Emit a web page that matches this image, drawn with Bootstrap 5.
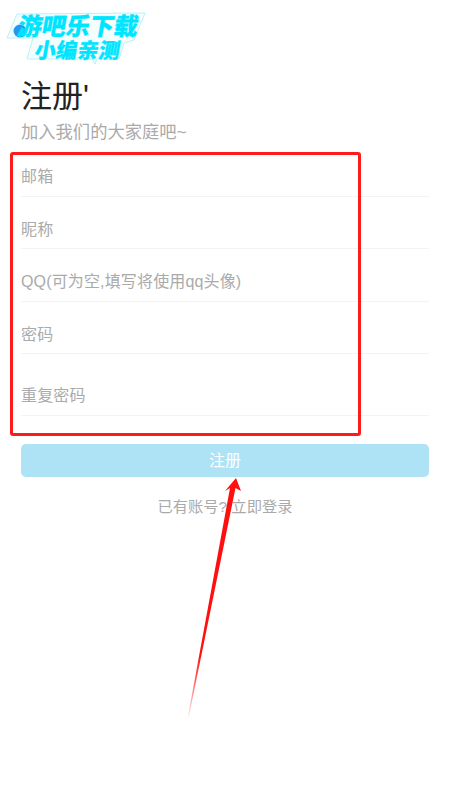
<!DOCTYPE html>
<html lang="zh-CN">
<head>
    <meta charset="UTF-8">
    <meta name="viewport" content="width=device-width, initial-scale=1.0">
    <title>注册</title>
    <link href="https://cdn.jsdelivr.net/npm/bootstrap@5.3.0/dist/css/bootstrap.min.css" rel="stylesheet">
    <style>
        body {
            font-family: "Liberation Sans", "Noto Sans CJK SC", sans-serif;
            background-color: #fff;
            width: 450px;
            height: 800px;
            overflow: hidden;
            position: relative;
        }

        .page-wrap {
            padding: 76px 21px 0;
        }

        .reg-title {
            font-size: 31px;
            line-height: 42px;
            font-weight: 400;
            color: #222;
            margin: 0;
        }

        .reg-sub {
            font-size: 17.3px;
            line-height: 24px;
            color: #aaa;
            margin: 2px 0 0;
        }

        .reg-field {
            display: block;
            width: 100%;
            height: 52.6px;
            border: 0;
            border-bottom: 1px solid #f3f3f3;
            border-radius: 0;
            padding: 15px 0 0;
            background: transparent;
            font-size: 16px;
            letter-spacing: .15px;
            box-shadow: none;
        }

        .reg-field.tall {
            height: 62px;
            padding: 22px 0 0;
        }

        .reg-field::placeholder {
            color: #aaa;
            opacity: 1;
        }

        .reg-btn {
            height: 33px;
            margin-top: 28px;
            padding: 0;
            font-size: 16px;
            line-height: 33px;
            color: #fff;
            background-color: #aee3f6;
            border: 0;
            border-radius: 5px;
        }

        .reg-link {
            font-size: 15.3px;
            line-height: 24px;
            color: #aaa;
            margin-top: 18px;
        }

        .red-box {
            position: absolute;
            left: 10px;
            top: 152px;
            width: 351px;
            height: 284px;
            border: 3px solid #fb1c1c;
            border-radius: 3px;
            pointer-events: none;
        }

        .overlay-svg {
            position: absolute;
            left: 0;
            top: 0;
            pointer-events: none;
        }

        .logo-a {
            font-family: "Noto Sans CJK SC", sans-serif;
            font-weight: 900;
            fill: #00e5ff;
            stroke: #00e5ff;
            stroke-width: 0.3px;
        }
    </style>
</head>
<body>
    <div class="page-wrap">
        <h1 class="reg-title">注册'</h1>
        <p class="reg-sub">加入我们的大家庭吧~</p>
        <form>
            <input type="text" class="form-control reg-field" placeholder="邮箱">
            <input type="text" class="form-control reg-field" placeholder="昵称">
            <input type="text" class="form-control reg-field" placeholder="QQ(可为空,填写将使用qq头像)">
            <input type="password" class="form-control reg-field" placeholder="密码">
            <input type="password" class="form-control reg-field tall" placeholder="重复密码">
            <button type="button" class="btn w-100 d-block reg-btn">注册</button>
        </form>
        <div class="text-center reg-link">已有账号? 立即登录</div>
    </div>

    <div class="red-box"></div>

    <svg class="overlay-svg" width="450" height="800" viewBox="0 0 450 800">
        <defs>
            <linearGradient id="tailFade" gradientUnits="userSpaceOnUse" x1="188" y1="716" x2="200" y2="655">
                <stop offset="0" stop-color="#ff0000" stop-opacity="0.1"/>
                <stop offset="1" stop-color="#ff0f0f"/>
            </linearGradient>
        </defs>
        <!-- logo -->
        <polygon points="17,14 145,13 134,40 124,43 119,59 97,59 95,64 92,59 27,59 33,38 7,38" fill="#f4feff" stroke="#b5f3fb" stroke-width="1"/>
        <circle cx="20" cy="31" r="6.5" fill="#1e9bf0"/>
        <text class="logo-a" x="17" y="35" font-size="24" textLength="120" transform="skewX(-10) translate(6 0)">游吧乐下载</text>
        <text class="logo-a" x="35" y="58" font-size="21" textLength="85" transform="skewX(-10) translate(9 0)">小编亲测</text>
        <!-- arrow -->
        <polygon points="236,478 241,491 235.5,488 189,716 188,716 230,488 225,491" fill="url(#tailFade)"/>
    </svg>
</body>
</html>
